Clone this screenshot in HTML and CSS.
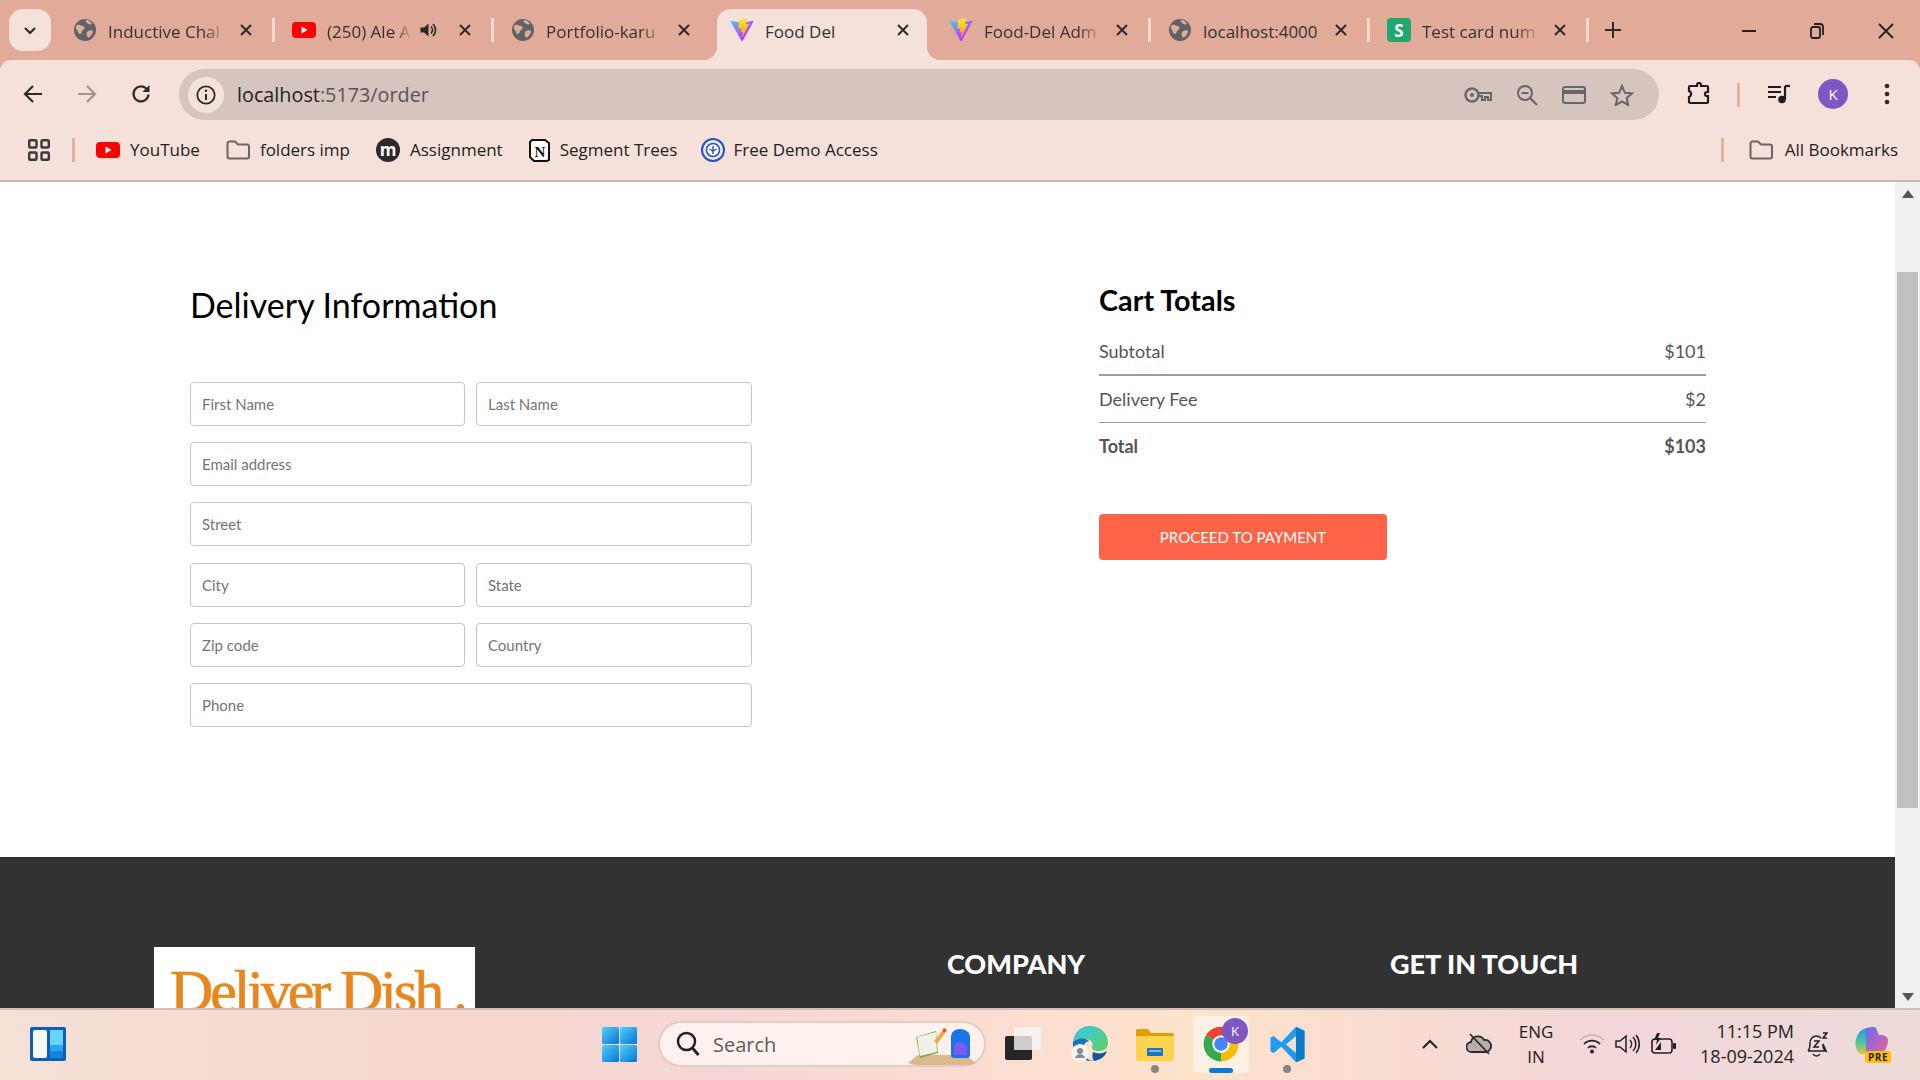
FILE: index.html
```html
<!DOCTYPE html>
<html lang="en">
<head>
    <meta charset="UTF-8">
    <title>Food Del</title>
    <link rel="stylesheet" href="styles.css">
</head>
<body>
    <svg class="defs" width="0" height="0">
        <defs>
            <linearGradient id="vite-a" x1="6" y1="33" x2="235" y2="344" gradientUnits="userSpaceOnUse"><stop stop-color="#41D1FF"/><stop offset="1" stop-color="#BD34FE"/></linearGradient>
            <linearGradient id="vite-b" x1="194" y1="9" x2="236" y2="293" gradientUnits="userSpaceOnUse"><stop stop-color="#FFEA83"/><stop offset=".08" stop-color="#FFDD35"/><stop offset="1" stop-color="#FFA800"/></linearGradient>
            <linearGradient id="win-a" x1="0" y1="0" x2="1" y2="1"><stop stop-color="#4fd0ff"/><stop offset="1" stop-color="#0a74d0"/></linearGradient>
            <linearGradient id="edge-a" x1="0" y1="0" x2="1" y2="1"><stop stop-color="#36c6e8"/><stop offset="1" stop-color="#5fd068"/></linearGradient>
            <linearGradient id="cop-a" x1="0" y1="0" x2="0" y2="1"><stop stop-color="#2f8fe8"/><stop offset=".55" stop-color="#45c9a0"/><stop offset="1" stop-color="#e4c13d"/></linearGradient>
            <linearGradient id="cop-b" x1="0" y1="0" x2="1" y2="1"><stop stop-color="#6a6cf0"/><stop offset="1" stop-color="#f0609a"/></linearGradient>
            <symbol id="globe" viewBox="0 0 24 24"><circle cx="12" cy="12" r="11" fill="#5f6368"/><path d="M4 7c3-1 4 1 6 1s2 3 0 4-1 4-3 4-2-3-3-4-2-3 0-5zM14 14c2-2 5-2 6-1 0 3-3 6-5 7-1-2-2-4-1-6zM13 2c3 0 5 2 6 4-2 1-4 0-5-1s-2-2-1-3z" fill="#e2aa99"/></symbol>
            <symbol id="vite" viewBox="0 0 410 404"><path d="M399.6 59.5L215.6 388.5c-3.8 6.8-13.6 6.8-17.4.1L10.6 59.6c-4.2-7.4 2.1-16.3 10.4-14.8l184.2 32.9c1.2.2 2.4.2 3.6 0l180.3-32.9c8.3-1.5 14.6 7.3 10.5 14.7z" fill="url(#vite-a)"/><path d="M293 1.6L156.8 28.3c-2.2.4-3.9 2.3-4 4.6l-8.4 141.4c-.2 3.3 2.9 5.9 6.1 5.2l37.9-8.7c3.5-.8 6.8 2.3 6 5.9l-11.3 55.1c-.8 3.7 2.7 6.9 6.4 5.8l23.4-7.1c3.6-1.1 7.1 2.1 6.4 5.8l-17.9 86.6c-1.1 5.4 6.1 8.4 9.1 3.7l2-3.1 111-221.4c1.9-3.7-1.3-7.9-5.4-7.1l-39 7.5c-3.7.7-6.8-2.7-5.8-6.3l25.5-88.3c1-3.6-2.1-7-5.8-6.3z" fill="url(#vite-b)"/></symbol>
            <symbol id="yt" viewBox="0 0 24 16"><rect width="24" height="16" rx="4" fill="#f00"/><path d="M9.5 4.5v7l6-3.5z" fill="#fff"/></symbol>
            <symbol id="close" viewBox="0 0 12 12"><path d="M1 1l10 10M11 1L1 11" stroke="#2e2a29" stroke-width="2" fill="none"/></symbol>
            <symbol id="folder" viewBox="0 0 24 20"><path d="M1.5 3.5a2 2 0 0 1 2-2h5.5l3 3h9a2 2 0 0 1 2 2v10a2 2 0 0 1-2 2h-17.500a2 2 0 0 1-2-2z" fill="none" stroke="#6a6664" stroke-width="2"/></symbol>
        </defs>
    </svg>

    <div class="browser">
        <div class="tabstrip">
            <button class="tab-menu"><svg width="14" height="9" viewBox="0 0 14 9"><path d="M2 2l5 5 5-5" stroke="#2b2b2b" stroke-width="2.200" fill="none"/></svg></button>
            <div class="tab">
                <svg class="tab-icon"><use href="#globe"/></svg>
                <span class="tab-title fade">Inductive Chal</span>
                <svg class="tab-close"><use href="#close"/></svg>
                <i class="tab-sep"></i>
            </div>
            <div class="tab">
                <svg class="tab-icon"><use href="#yt"/></svg>
                <span class="tab-title tab-title-short fade">(250) Ale A</span>
                <svg class="tab-sound" viewBox="0 0 18 18"><path d="M1.500 6.500h3.500l4.500-4v13l-4.500-4h-3.500z" fill="#2e2a29"/><path d="M12 5.500a5 5 0 0 1 0 7M14 3a8.500 8.500 0 0 1 0 12" stroke="#2e2a29" stroke-width="1.700" fill="none"/></svg>
                <svg class="tab-close"><use href="#close"/></svg>
                <i class="tab-sep"></i>
            </div>
            <div class="tab">
                <svg class="tab-icon"><use href="#globe"/></svg>
                <span class="tab-title fade">Portfolio-karu</span>
                <svg class="tab-close"><use href="#close"/></svg>
                <i class="tab-sep tab-sep-off"></i>
            </div>
            <div class="tab tab-active">
                <span class="tab-bg"></span>
                <svg class="tab-icon"><use href="#vite"/></svg>
                <span class="tab-title">Food Del</span>
                <svg class="tab-close"><use href="#close"/></svg>
                <i class="tab-sep tab-sep-off"></i>
            </div>
            <div class="tab">
                <svg class="tab-icon"><use href="#vite"/></svg>
                <span class="tab-title fade">Food-Del Adm</span>
                <svg class="tab-close"><use href="#close"/></svg>
                <i class="tab-sep"></i>
            </div>
            <div class="tab">
                <svg class="tab-icon"><use href="#globe"/></svg>
                <span class="tab-title">localhost:4000</span>
                <svg class="tab-close"><use href="#close"/></svg>
                <i class="tab-sep"></i>
            </div>
            <div class="tab">
                <svg class="tab-icon" viewBox="0 0 24 24"><rect width="24" height="24" rx="4" fill="#1fa971"/><text x="12" y="18.500" class="s-letter">S</text></svg>
                <span class="tab-title fade">Test card num</span>
                <svg class="tab-close"><use href="#close"/></svg>
                <i class="tab-sep"></i>
            </div>
            <svg class="tab-new" viewBox="0 0 16 16"><path d="M8 0v16M0 8h16" stroke="#2b2b2b" stroke-width="2"/></svg>
            <div class="win-controls">
                <svg width="16" height="16" viewBox="0 0 16 16"><path d="M1 8h14" stroke="#222" stroke-width="2"/></svg>
                <svg width="16" height="18" viewBox="0 0 16 18"><rect x="2" y="5" width="9" height="11" rx="2" fill="none" stroke="#222" stroke-width="1.800"/><path d="M5 2h6a3 3 0 0 1 3 3v8" fill="none" stroke="#222" stroke-width="1.800"/></svg>
                <svg width="18" height="18" viewBox="0 0 18 18"><path d="M2 2l14 14M16 2L2 16" stroke="#222" stroke-width="1.800"/></svg>
            </div>
        </div>

        <div class="toolbar">
            <svg class="nav-icon" viewBox="0 0 20 20"><path d="M19 10H2M10 2l-8 8 8 8" stroke="#2b2b2b" stroke-width="2.200" fill="none"/></svg>
            <svg class="nav-icon" viewBox="0 0 20 20"><path d="M1 10h17M10 2l8 8-8 8" stroke="#a39490" stroke-width="2.200" fill="none"/></svg>
            <svg class="nav-icon" viewBox="0 0 20 20"><path d="M17.500 10.500a7.500 7.500 0 1 1-2.300-6l2.300 2.300" stroke="#2b2b2b" stroke-width="2.200" fill="none"/><path d="M18.500 1v7h-7z" fill="#2b2b2b"/></svg>
            <div class="omnibox">
                <span class="omni-info"><svg width="20" height="20" viewBox="0 0 20 20"><circle cx="10" cy="10" r="8.700" fill="none" stroke="#2b2b2b" stroke-width="1.800"/><path d="M10 9v6" stroke="#2b2b2b" stroke-width="2"/><circle cx="10" cy="5.800" r="1.200" fill="#2b2b2b"/></svg></span>
                <span class="omni-url"><b>localhost</b>:5173/order</span>
                <div class="omni-actions">
                    <svg width="28" height="18" viewBox="0 0 28 18"><circle cx="8" cy="9" r="6.500" fill="none" stroke="#666" stroke-width="2.400"/><circle cx="8" cy="9" r="2" fill="#666"/><path d="M14 7h13v7h-3v-3h-3v3h-3v-4h-4" fill="none" stroke="#666" stroke-width="2"/></svg>
                    <svg width="22" height="22" viewBox="0 0 22 22"><circle cx="9" cy="9" r="7" fill="none" stroke="#666" stroke-width="2"/><path d="M5.500 9h7M14 14l7 7" stroke="#666" stroke-width="2"/></svg>
                    <svg width="24" height="18" viewBox="0 0 24 18"><rect x="1" y="1" width="22" height="16" rx="2" fill="none" stroke="#666" stroke-width="2"/><path d="M1 4h22v4H1z" fill="#666"/></svg>
                    <svg width="24" height="22" viewBox="0 0 24 22"><path d="M12 2l2.900 6.800 7.100.6-5.400 4.800 1.700 7-6.300-3.800-6.300 3.800 1.700-7L2 9.400l7.100-.6z" fill="none" stroke="#666" stroke-width="2"/></svg>
                </div>
            </div>
            <svg class="ext-icon" width="24" height="24" viewBox="0 0 24 24"><path d="M8 4h2V3a2 2 0 0 1 4 0v1h6a1 1 0 0 1 1 1v5h-1a2 2 0 0 0 0 4h1v6a1 1 0 0 1-1 1H3l-1-1v-5a3 3 0 0 0 2-2.500A3 3 0 0 0 2 9V5a1 1 0 0 1 1-1z" fill="none" stroke="#1d1d1d" stroke-width="2.200"/></svg>
            <i class="bar-sep sep-tool"></i>
            <svg class="media-icon" width="24" height="20" viewBox="0 0 24 20"><path d="M1 3h13M1 8h13M1 13h8" stroke="#1d1d1d" stroke-width="2"/><path d="M18 2v13" stroke="#1d1d1d" stroke-width="2.200"/><path d="M18 2h5" stroke="#1d1d1d" stroke-width="2.200"/><circle cx="15" cy="15.500" r="3.800" fill="#1d1d1d"/></svg>
            <span class="avatar">K</span>
            <svg class="more-icon" width="6" height="22" viewBox="0 0 6 22"><circle cx="3" cy="3" r="2.300" fill="#2b2b2b"/><circle cx="3" cy="11" r="2.300" fill="#2b2b2b"/><circle cx="3" cy="19" r="2.300" fill="#2b2b2b"/></svg>
        </div>

        <div class="bookmarks">
            <svg class="apps-icon" width="22" height="22" viewBox="0 0 22 22"><g fill="none" stroke="#3a3a3a" stroke-width="2.400"><rect x="1.200" y="1.200" width="7.300" height="7.300" rx="1"/><rect x="13.500" y="1.200" width="7.300" height="7.300" rx="1"/><rect x="1.200" y="13.500" width="7.300" height="7.300" rx="1"/><rect x="13.500" y="13.500" width="7.300" height="7.300" rx="1"/></g></svg>
            <i class="bar-sep sep-apps"></i>
            <a class="bm"><svg width="24" height="16"><use href="#yt"/></svg><span class="bm-text">YouTube</span></a>
            <a class="bm"><svg width="24" height="20"><use href="#folder"/></svg><span class="bm-text">folders imp</span></a>
            <a class="bm"><svg width="24" height="24" viewBox="0 0 24 24"><circle cx="12" cy="12" r="12" fill="#2a2a2a"/><text x="12" y="17.500" class="m-letter">m</text></svg><span class="bm-text">Assignment</span></a>
            <a class="bm"><svg width="21" height="23" viewBox="0 0 21 23"><path d="M3 1h13l4 3v17l-2 1H5l-4-4V3z" fill="#fff" stroke="#111" stroke-width="2"/><text x="11" y="17.500" class="n-letter">N</text></svg><span class="bm-text">Segment Trees</span></a>
            <a class="bm bm-seal"><svg width="24" height="24" viewBox="0 0 24 24"><circle cx="12" cy="12" r="11" fill="#e8ecf8" stroke="#2a4fc0" stroke-width="2"/><circle cx="12" cy="12" r="6.500" fill="#fff" stroke="#2a4fc0" stroke-width="1.500"/><path d="M12 8v8M8.500 11l3.500 2 3.500-2" stroke="#2a4fc0" stroke-width="1.400" fill="none"/></svg><span class="bm-text">Free Demo Access</span></a>
            <i class="bar-sep sep-all"></i>
            <a class="bm bm-all"><svg width="24" height="20"><use href="#folder"/></svg><span class="bm-text">All Bookmarks</span></a>
        </div>
    </div>

    <div class="viewport">
        <div class="page">
            <section class="order">
                <div class="order-left">
                    <h2 class="order-title">Delivery Information</h2>
                    <form class="order-form">
                        <input class="field" placeholder="First Name">
                        <input class="field" placeholder="Last Name">
                        <input class="field field-wide" placeholder="Email address">
                        <input class="field field-wide" placeholder="Street">
                        <input class="field" placeholder="City">
                        <input class="field" placeholder="State">
                        <input class="field" placeholder="Zip code">
                        <input class="field" placeholder="Country">
                        <input class="field field-wide" placeholder="Phone">
                    </form>
                </div>
                <div class="order-right">
                    <h2 class="cart-title">Cart Totals</h2>
                    <div class="cart-row"><span>Subtotal</span><span>$101</span></div>
                    <hr class="cart-line">
                    <div class="cart-row"><span>Delivery Fee</span><span>$2</span></div>
                    <hr class="cart-line">
                    <div class="cart-row cart-total"><span>Total</span><span>$103</span></div>
                    <button class="pay-btn" type="button">PROCEED TO PAYMENT</button>
                </div>
            </section>
            <footer class="footer">
                <div class="footer-logo"><span>Deliver Dish .</span></div>
                <h3 class="footer-head">COMPANY</h3>
                <h3 class="footer-head">GET IN TOUCH</h3>
            </footer>
        </div>
        <div class="scrollbar">
            <span class="arrow arrow-up"></span>
            <span class="thumb"></span>
            <span class="arrow arrow-down"></span>
        </div>
    </div>

    <div class="taskbar">
        <div class="tb-left">
            <svg width="36" height="34" viewBox="0 0 36 34"><rect width="36" height="34" rx="2" fill="#0b5fb5"/><rect x="3" y="3" width="14" height="28" rx="2" fill="#f7f7f7"/><rect x="20" y="3" width="13" height="15" fill="#66d4fb"/><rect x="20" y="18" width="13" height="6" fill="#2aa4f0"/><rect x="20" y="24" width="13" height="7" fill="#0f86e0"/></svg>
        </div>
        <svg class="tb-win" width="35" height="35" viewBox="0 0 35 35"><g fill="url(#win-a)"><rect width="17" height="17" rx="1.500"/><rect x="18" width="17" height="17" rx="1.500"/><rect y="18" width="17" height="17" rx="1.500"/><rect x="18" y="18" width="17" height="17" rx="1.500"/></g></svg>
        <div class="tb-search">
            <svg width="24" height="26" viewBox="0 0 24 26"><circle cx="10.500" cy="10.500" r="8.500" fill="none" stroke="#222" stroke-width="2.500"/><path d="M16.500 17l6 7" stroke="#222" stroke-width="2.800"/></svg>
            <span class="tb-search-text">Search</span>
            <svg class="tb-search-art" width="68" height="38" viewBox="0 0 68 38"><path d="M0 36l10-8h48l10 8q-4 2-8 2H8q-4 0-8-2z" fill="#dcb98c"/><path d="M8 10l20-6 2 22-18 5z" fill="#6fae52"/><path d="M9 10l19-5 1 20-17 4z" fill="#f2efe6"/><path d="M26 14l8-10 3 2-8 11z" fill="#f5a63a"/><path d="M34 4l2-3 3 2-2 3z" fill="#e0503f"/><path d="M43 10c0-5 4-8 9-8s10 3 10 8v18c0 2-1 3-3 3H46c-2 0-3-1-3-3z" fill="#1a73e8"/><path d="M46 22c0-4 3-7 6-7s7 3 7 7v6H46z" fill="#7d5af0"/></svg>
        </div>
        <span class="tb-slot"><svg width="36" height="34" viewBox="0 0 36 34"><rect y="9" width="27" height="24" rx="2" fill="#262626"/><rect x="9" width="27" height="23" rx="1" fill="#f6f6f6" fill-opacity=".8"/></svg></span>
        <span class="tb-slot"><svg width="37" height="36" viewBox="0 0 37 36"><path d="M2 16C3 6 10 0 19 0c10 0 18 7 18 17 0 6-5 8-10 8-4 0-7-2-6-5 2-3-1-7-7-7-5 0-10 0-12 3z" fill="url(#edge-a)"/><path d="M2 16c4-4 12-5 16-1-6 1-8 9-3 16 2 3 5 4 8 4C11 36 1 28 2 16z" fill="#1b6fc2"/><path d="M23 35c6-1 11-4 13-10-4 3-10 3-14 1-1 3-1 6 1 9z" fill="#12559e"/><circle cx="9" cy="27" r="9" fill="#f4f4f4"/><circle cx="9" cy="25" r="3" fill="#8a8a8a"/><path d="M4 32c1-3 3-4 5-4s4 1 5 4z" fill="#8a8a8a"/></svg></span>
        <span class="tb-slot tb-running"><svg width="38" height="33" viewBox="0 0 38 33"><path d="M0 3a2 2 0 0 1 2-2h10l3 4h21a2 2 0 0 1 2 2v4H0z" fill="#e0a100"/><path d="M0 8h38v23a2 2 0 0 1-2 2H2a2 2 0 0 1-2-2z" fill="#ffd24d"/><rect x="11" y="20" width="16" height="8" rx="1" fill="#1a78c2"/><path d="M13 23h12" stroke="#e8f4fc" stroke-width="1"/></svg></span>
        <span class="tb-slot tb-active">
            <svg width="38" height="38" viewBox="0 0 48 48"><path d="M24 24L5 13A22 22 0 0 1 43 13z" fill="#ea4335"/><path d="M24 24L43 13A22 22 0 0 1 24 46z" fill="#fbbc04"/><path d="M24 24L24 46A22 22 0 0 1 5 13z" fill="#34a853"/><circle cx="24" cy="24" r="11" fill="#fff"/><circle cx="24" cy="24" r="8.500" fill="#4285f4"/></svg>
            <span class="tb-badge">K</span>
        </span>
        <span class="tb-slot tb-running"><svg width="37" height="37" viewBox="0 0 48 48"><path d="M35 1L16 21 6 13l-4 2v18l4 2 10-8 19 20 11-5V6zM35 13L22 24l13 11z" fill="#1f9cf0" fill-rule="evenodd"/><path d="M35 1l11 5v36l-11 5z" fill="#0a7cc9"/></svg></span>

        <div class="tb-right">
            <svg class="tray-chevron" width="16" height="10" viewBox="0 0 16 10"><path d="M1 9l7-7 7 7" stroke="#222" stroke-width="2" fill="none"/></svg>
            <svg class="tray-cloud" width="26" height="22" viewBox="0 0 26 22"><path d="M6 19a5 5 0 0 1-1-10 7 7 0 0 1 13-2 6 6 0 0 1 2 12z" fill="#b9aea9" stroke="#2b2b2b" stroke-width="1.800"/><path d="M4 1l19 20" stroke="#2b2b2b" stroke-width="1.800"/></svg>
            <div class="tray-lang"><span>ENG</span><span>IN</span></div>
            <svg class="tray-icon" width="26" height="20" viewBox="0 0 26 20"><path d="M1 6a17 17 0 0 1 24 0" stroke="#c9b8b4" stroke-width="1.600" fill="none"/><path d="M5 10a11 11 0 0 1 16 0M9 14a5.500 5.500 0 0 1 8 0" stroke="#222" stroke-width="1.800" fill="none"/><circle cx="13" cy="17.500" r="2" fill="#222"/></svg>
            <svg class="tray-icon" width="26" height="22" viewBox="0 0 26 22"><path d="M1 8h4l6-5v16l-6-5H1z" fill="none" stroke="#222" stroke-width="1.500"/><path d="M15 7a6 6 0 0 1 0 8M18 4a10 10 0 0 1 0 14M21 2a14 14 0 0 1 0 18" stroke="#222" stroke-width="1.500" fill="none"/></svg>
            <svg class="tray-icon" width="26" height="24" viewBox="0 0 26 24"><rect x="1" y="7" width="20" height="14" rx="3" fill="none" stroke="#222" stroke-width="1.600"/><path d="M4 18l6-8v8z" fill="#222"/><rect x="22" y="11" width="3" height="6" rx="1" fill="#222"/><path d="M6 1L3 8h3l-1 5 5-7H7l2-5z" fill="#222"/></svg>
            <div class="tray-clock"><span>11:15 PM</span><span>18-09-2024</span></div>
            <svg class="tray-bell" width="22" height="26" viewBox="0 0 22 26"><path d="M2 20c2-2 2-4 2-8s3-7 6-7 4 1 5 2M17 13c0 4 0 5 3 7z" fill="none" stroke="#222" stroke-width="1.500"/><path d="M2 20h18M7 23a4 4 0 0 0 7 0" stroke="#222" stroke-width="1.500" fill="none"/><path d="M8 10h5l-5 6h5M17 2h4l-4 5h4" stroke="#222" stroke-width="1.500" fill="none"/></svg>
            <div class="tray-copilot">
                <svg width="34" height="30" viewBox="0 0 34 30"><path d="M2 22C0 14 4 5 10 3c5-2 10-2 12 0L14 28H8c-3 0-5-3-6-6z" fill="url(#cop-a)"/><path d="M12 3c3-2 8-3 10-1l3 7c3 0 8 0 9 5 0 6-3 12-8 14-4 1-10 1-14 0z" fill="url(#cop-b)"/></svg>
                <span class="pre-badge">PRE</span>
            </div>
        </div>
    </div>
</body>
</html>
```

FILE: styles.css
```css
* {
    box-sizing: border-box;
}
html, body {
    margin: 0;
    height: 100%;
}
body {
    width: 1920px;
    height: 1080px;
    overflow: hidden;
    display: flex;
    flex-direction: column;
    font-family: "Open Sans", sans-serif;
    background: #fff;
}
.defs {
    position: absolute;
}

/* browser chrome */
.browser {
    background: #e2aa99;
    flex: none;
}
.tabstrip {
    height: 60px;
    display: flex;
    align-items: flex-start;
    position: relative;
    z-index: 0;
}
.tab-menu {
    width: 42px;
    height: 42px;
    margin: 9px 4px 0 9px;
    flex: none;
    border: 0;
    padding: 0;
    border-radius: 14px;
    background: #f5e1da;
    display: flex;
    align-items: center;
    justify-content: center;
}
.tab {
    width: 219px;
    height: 42px;
    margin-top: 9px;
    flex: none;
    padding-left: 18px;
    display: flex;
    align-items: center;
    position: relative;
    font-size: 17px;
    color: #333;
}
.tab-bg {
    position: absolute;
    z-index: -1;
    left: 5px;
    right: 4px;
    top: 0;
    height: 51px;
    background: #f5e1da;
    border-radius: 14px 14px 0 0;
}
.tab-bg::before,
.tab-bg::after {
    content: "";
    position: absolute;
    bottom: 0;
    width: 14px;
    height: 14px;
}
.tab-bg::before {
    left: -14px;
    background: radial-gradient(circle at 0 0, transparent 14px, #f5e1da 14.5px);
}
.tab-bg::after {
    right: -14px;
    background: radial-gradient(circle at 100% 0, transparent 14px, #f5e1da 14.5px);
}
.tab-icon {
    width: 24px;
    height: 24px;
    flex: none;
}
.tab-title {
    width: 118px;
    margin: 2px 0 0 11px;
    white-space: nowrap;
    overflow: hidden;
    flex: none;
}
.tab-title-short {
    width: 85px;
}
.fade {
    -webkit-mask-image: linear-gradient(to right, #000 80%, transparent);
    mask-image: linear-gradient(to right, #000 80%, transparent);
}
.tab-sound {
    width: 18px;
    height: 18px;
    flex: none;
    margin-left: 7px;
}
.tab-close {
    width: 12px;
    height: 12px;
    flex: none;
    margin-left: auto;
    margin-right: 20px;
}
.tab-sep {
    width: 3px;
    height: 24px;
    flex: none;
    background: #f3d9cf;
    margin-right: -1px;
}
.tab-sep-off {
    background: transparent;
}
.tab-new {
    width: 16px;
    height: 16px;
    margin: 22px 0 0 17px;
    flex: none;
}
.win-controls {
    margin-left: auto;
    padding: 22px 25px 0 0;
    display: flex;
    align-items: center;
    gap: 52px;
    height: 40px;
}
.s-letter {
    font: 700 17px "Open Sans", sans-serif;
    fill: #fff;
    text-anchor: middle;
}
.toolbar {
    height: 65px;
    background: #f5e1da;
    border-radius: 11px 11px 0 0;
    display: flex;
    align-items: flex-start;
    padding: 9px 0 0 23px;
}
.nav-icon {
    width: 20px;
    height: 20px;
    margin: 15px 34px 0 0;
    flex: none;
}
.omnibox {
    width: 1480px;
    height: 51px;
    margin-left: -6px;
    flex: none;
    background: #d6c5be;
    border-radius: 26px;
    display: flex;
    align-items: center;
    padding: 0 25px 0 9px;
}
.omni-info {
    width: 36px;
    height: 36px;
    border-radius: 50%;
    background: #f5e1da;
    display: flex;
    align-items: center;
    justify-content: center;
    flex: none;
}
.omni-url {
    margin-left: 13px;
    font-size: 19.800px;
    color: #555;
}
.omni-url b {
    font-weight: 400;
    color: #1f1f1f;
}
.omni-actions {
    margin-left: auto;
    display: flex;
    align-items: center;
    gap: 24px;
}
.ext-icon {
    margin: 13px 0 0 28px;
    flex: none;
}
.bar-sep {
    display: block;
    width: 3px;
    height: 24px;
    background: #e4b0a0;
    flex: none;
}
.sep-tool {
    margin: 14px 0 0 26px;
}
.media-icon {
    margin: 15px 0 0 27px;
    flex: none;
}
.avatar {
    width: 30px;
    height: 30px;
    margin: 10px 0 0 27px;
    border-radius: 50%;
    background: #7e57c2;
    color: #fff;
    font-size: 15px;
    display: flex;
    align-items: center;
    justify-content: center;
    flex: none;
}
.more-icon {
    margin: 14px 0 0 36px;
    flex: none;
}
.bookmarks {
    height: 57px;
    background: #f5e1da;
    border-bottom: 2px solid #c7b6b0;
    display: flex;
    align-items: center;
    padding: 0 0 5px 28px;
    font-size: 17px;
    color: #222;
}
.sep-apps {
    margin: 0 21px 0 22px;
}
.bm {
    display: flex;
    align-items: center;
    gap: 10px;
    margin-right: 26px;
    white-space: nowrap;
}
.bm-text {
    margin-top: -2px;
}
.bm-seal {
    margin-left: -2px;
    gap: 8px;
}
.sep-all {
    margin-left: auto;
    margin-right: 25px;
}
.bm-all {
    margin-right: 22px;
    gap: 12px;
}
.m-letter {
    font: 700 17px "Open Sans", sans-serif;
    fill: #fff;
    text-anchor: middle;
}
.n-letter {
    font: 700 15px "Liberation Serif", serif;
    fill: #111;
    text-anchor: middle;
}

/* page */
.viewport {
    flex: 1;
    min-height: 0;
    display: flex;
}
.page {
    flex: 1;
    min-width: 0;
    overflow: hidden;
    font-family: Lato, sans-serif;
}
.order {
    height: 675px;
    padding: 102px 189px 0 190px;
    display: flex;
    justify-content: space-between;
}
.order-left {
    width: 562px;
}
.order-title {
    margin: 0 0 56px;
    font-size: 34px;
    line-height: 42px;
    font-weight: 400;
    color: #000;
}
.order-form {
    display: grid;
    grid-template-columns: 275px 276px;
    column-gap: 11px;
    row-gap: 16.200px;
}
.field {
    width: 100%;
    height: 44px;
    padding: 0 11px;
    border: 1.500px solid #c5c5c5;
    border-radius: 4px;
    font-family: Lato, sans-serif;
    font-size: 15px;
    outline: 0;
}
.field::placeholder {
    color: #757575;
}
.field-wide {
    grid-column: 1 / 3;
}
.order-right {
    width: 607px;
    margin-top: -1px;
}
.cart-title {
    margin: 0 0 22px;
    font-size: 28.800px;
    line-height: 34px;
    font-weight: 700;
    color: #000;
}
.cart-row {
    display: flex;
    justify-content: space-between;
    font-size: 18px;
    line-height: 24px;
    color: #555;
}
.cart-line {
    height: 1.500px;
    border: 0;
    margin: 11px 0 11px;
    background: #9b9b9b;
}
.cart-total {
    font-weight: 700;
}
.pay-btn {
    display: block;
    width: 288px;
    height: 46px;
    margin-top: 56px;
    border: 0;
    border-radius: 4px;
    background: #ff6347;
    color: #fff;
    font-family: Lato, sans-serif;
    font-size: 15px;
}
.footer {
    height: 300px;
    background: #323232;
    padding: 90px 0 0 154px;
    display: grid;
    grid-template-columns: 793px 443px 1fr;
    align-items: start;
}
.footer-logo {
    width: 321px;
    height: 100px;
    background: #fff;
    padding: 14px 0 0 16px;
}
.footer-logo span {
    display: block;
    font-family: "Liberation Serif", serif;
    font-size: 60px;
    line-height: 60px;
    letter-spacing: -3.100px;
    color: #e8871e;
    -webkit-text-stroke: .7px #e8871e;
    white-space: nowrap;
}
.footer-head {
    margin: 0;
    font-size: 27px;
    line-height: 34px;
    font-weight: 900;
    color: #fff;
}
.scrollbar {
    width: 25px;
    flex: none;
    background: #f1f1f1;
    display: flex;
    flex-direction: column;
    align-items: center;
}
.arrow {
    width: 0;
    height: 0;
    border-left: 6px solid transparent;
    border-right: 6px solid transparent;
    flex: none;
}
.arrow-up {
    margin-top: 8px;
    border-bottom: 8px solid #555;
}
.arrow-down {
    margin-top: 185px;
    border-top: 8px solid #555;
}
.thumb {
    width: 21px;
    height: 536px;
    margin-top: 74px;
    background: #c1c1c1;
    flex: none;
}

/* windows taskbar */
.taskbar {
    height: 72px;
    flex: none;
    border-top: 2px solid #d3bdb7;
    background: linear-gradient(90deg, #f5dfd6 0%, #f5d8d0 25%, #f4d6d6 38%, #fbdfd0 55%, #fce3ca 62%, #f6dad4 75%, #f3d7d9 85%, #ecdcd8 100%);
    display: flex;
    align-items: center;
    padding-bottom: 2px;
}
.tb-left {
    width: 602px;
    padding-left: 30px;
    display: flex;
    flex: none;
}
.tb-win {
    flex: none;
}
.tb-search {
    width: 328px;
    height: 46px;
    margin: 0 9px 0 21px;
    flex: none;
    background: #fdf1ee;
    border: 2px solid #e6cbc5;
    border-radius: 23px;
    display: flex;
    align-items: center;
    padding: 0 8px 0 16px;
    position: relative;
}
.tb-search-text {
    margin-left: 13px;
    font-size: 20px;
    color: #5d5d5d;
}
.tb-search-art {
    margin-left: auto;
    align-self: flex-end;
}
.tb-slot {
    width: 56px;
    height: 57px;
    margin-right: 10px;
    flex: none;
    display: flex;
    align-items: center;
    justify-content: center;
    position: relative;
}
.tb-running::after {
    content: "";
    position: absolute;
    left: 24px;
    bottom: 0;
    width: 8px;
    height: 8px;
    border-radius: 50%;
    background: #8a8481;
}
.tb-active {
    background: #fbf0e3;
    border-radius: 5px;
}
.tb-active::after {
    content: "";
    position: absolute;
    left: 16px;
    bottom: 0;
    width: 24px;
    height: 5px;
    border-radius: 3px;
    background: #0a78d6;
}
.tb-badge {
    position: absolute;
    right: 1px;
    top: 2px;
    width: 26px;
    height: 26px;
    border-radius: 50%;
    background: #7e57c2;
    color: #fff;
    font-size: 13px;
    display: flex;
    align-items: center;
    justify-content: center;
}
.tb-right {
    margin-left: auto;
    padding-right: 30px;
    display: flex;
    align-items: center;
    color: #222;
}
.tray-chevron {
    margin-right: 28px;
}
.tray-cloud {
    margin-right: 16px;
}
.tray-lang,
.tray-clock {
    display: flex;
    flex-direction: column;
    font-size: 17px;
    line-height: 25px;
}
.tray-lang {
    width: 56px;
    align-items: center;
    margin-right: 15px;
}
.tray-icon {
    margin-right: 10px;
}
.tray-clock {
    width: 107px;
    align-items: flex-end;
    font-size: 18px;
}
.tray-bell {
    margin: 0 26px 0 12px;
}
.tray-copilot {
    position: relative;
    width: 36px;
    height: 36px;
}
.pre-badge {
    position: absolute;
    right: -1px;
    bottom: -1px;
    padding: 0 3px;
    border-radius: 3px;
    background: #ffc000;
    color: #222;
    font-size: 10px;
    font-weight: 700;
    line-height: 12px;
    letter-spacing: .5px;
}
```
